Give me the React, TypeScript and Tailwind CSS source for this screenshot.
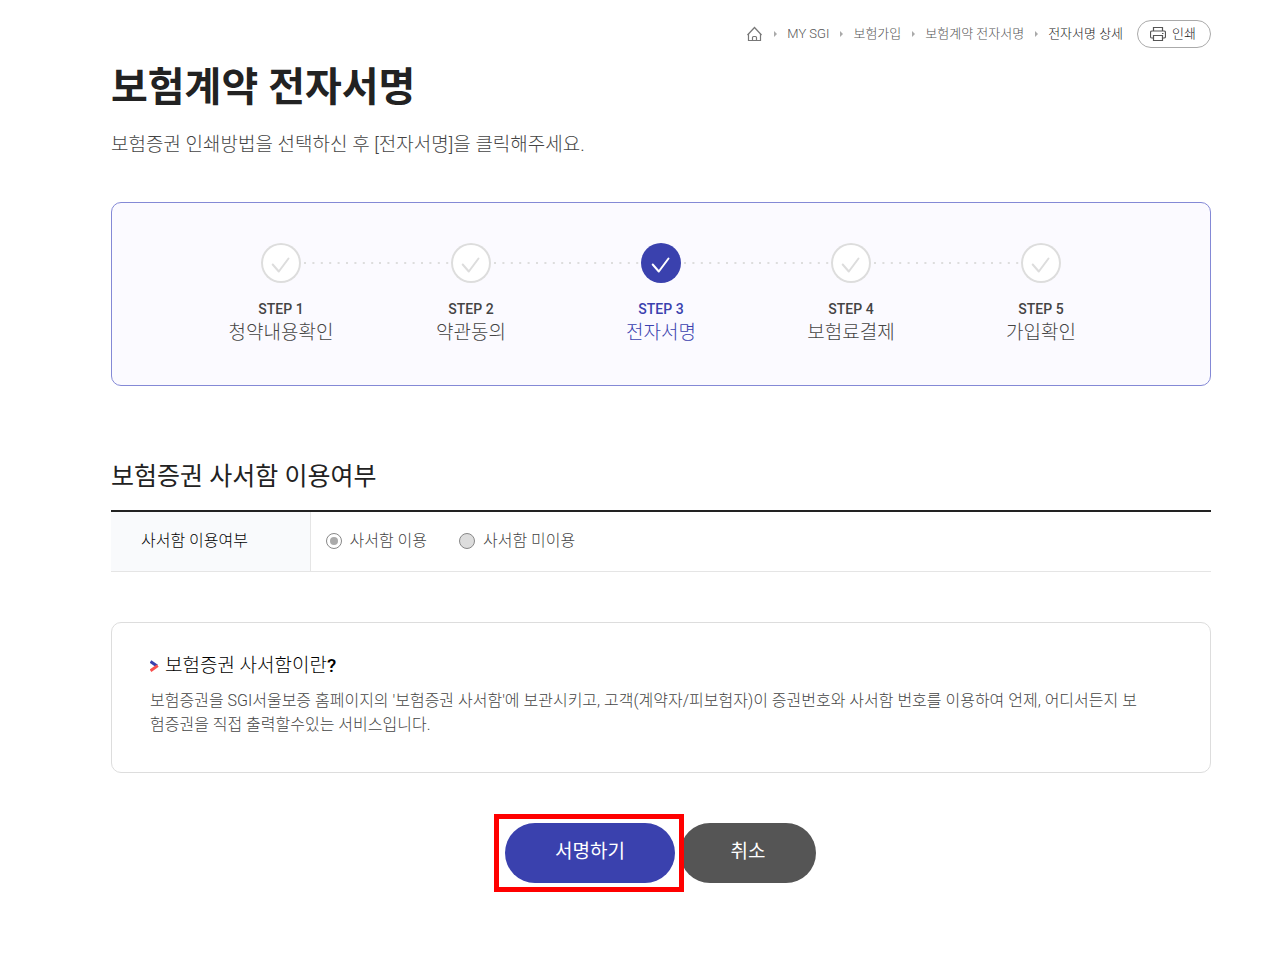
import { Fragment } from "react";
import clsx from "clsx";

const CRUMBS = ["MY SGI", "보험가입", "보험계약 전자서명", "전자서명 상세"];

const STEPS = ["청약내용확인", "약관동의", "전자서명", "보험료결제", "가입확인"];

const CURRENT_STEP = 2;

function HomeIcon() {
  return (
    <svg width="16" height="16" viewBox="0 0 16 16" fill="none" stroke="#777" strokeWidth="1.2">
      <path d="M0.5 9 L7.5 1.5 L14.5 9" />
      <path d="M1.5 8 V14.5 H13.5 V8" />
      <path d="M5.5 14.5 V11.5 Q5.5 10.5 6.5 10.5 H8.5 Q9.5 10.5 9.5 11.5 V14.5" />
    </svg>
  );
}

function PrintIcon() {
  return (
    <svg width="16" height="16" viewBox="0 0 16 16" fill="none" stroke="#555" strokeWidth="1.2">
      <path d="M3.5 5 V1.5 H12.5 V5" />
      <path d="M3.5 12 H2 Q0.5 12 0.5 10.5 V6.5 Q0.5 5 2 5 H14 Q15.5 5 15.5 6.5 V10.5 Q15.5 12 14 12 H12.5" />
      <path d="M3.5 9.5 H12.5 V14.5 H3.5 Z" />
      <path d="M12 7.5 H13.5" />
    </svg>
  );
}

function CrumbArrow() {
  return (
    <svg width="3" height="6" viewBox="0 0 3 6" fill="#aaa">
      <path d="M0 0 L3 3 L0 6 Z" />
    </svg>
  );
}

function CheckMark() {
  return (
    <svg width="40" height="40" viewBox="0 0 40 40" fill="none" stroke="currentColor" strokeWidth="2" strokeLinecap="round" strokeLinejoin="round">
      <path d="M11.7 21.5 L17.8 28.5 L27.5 15.5" />
    </svg>
  );
}

function BulletArrow() {
  return (
    <svg width="9" height="12" viewBox="0 0 9 12" fill="none" strokeWidth="3">
      <path d="M0.5 1.5 L7 6" stroke="#3a41ae" />
      <path d="M0.5 10.8 L7.8 5.6" stroke="#f9504e" />
    </svg>
  );
}

function Breadcrumb() {
  return (
    <div className="flex items-center justify-end">
      <nav className="flex items-center text-[13px] leading-5 text-[#555]">
        <a href="#home" aria-label="홈">
          <HomeIcon />
        </a>
        {CRUMBS.map((crumb, i) => (
          <Fragment key={crumb}>
            <span className="mr-[10px] ml-[11px]">
              <CrumbArrow />
            </span>
            <a href="#crumb" className={clsx(i === CRUMBS.length - 1 && "text-[#222]")}>
              {crumb}
            </a>
          </Fragment>
        ))}
      </nav>
      <button
        type="button"
        className="ml-3.5 flex h-7 items-center gap-1.5 rounded-full border border-[#aaa] pr-3.5 pl-3 text-[13px] text-[#222]"
      >
        <PrintIcon />
        인쇄
      </button>
    </div>
  );
}

function Steps() {
  return (
    <ol className="mt-[43px] flex justify-center rounded-[10px] border border-[#8489d6] bg-[#fbfaff] pt-10 pb-[38px]">
      {STEPS.map((label, i) => {
        const current = i === CURRENT_STEP;
        return (
          <li
            key={label}
            className={clsx(
              "flex w-[190px] flex-col items-center",
              current ? "text-[#3a41ae]" : "text-[#444]",
            )}
          >
            <div className="flex w-full items-center">
              <Dots hidden={i === 0} />
              <span
                className={clsx(
                  "h-10 w-10 shrink-0 rounded-full",
                  current
                    ? "bg-[#3a41ae] text-white"
                    : "bg-white text-[#ddd] shadow-[inset_0_0_0_2px_#ddd]",
                )}
              >
                <CheckMark />
              </span>
              <Dots hidden={i === STEPS.length - 1} />
            </div>
            <span className="mt-4 text-sm leading-5 font-medium">STEP {i + 1}</span>
            <span className="text-[19px] leading-7">{label}</span>
          </li>
        );
      })}
    </ol>
  );
}

function Dots({ hidden }: { hidden: boolean }) {
  return (
    <svg className={clsx("h-0.5 min-w-0 flex-1", hidden && "invisible")}>
      <line x1="3" y1="1" x2="100%" y2="1" stroke="#ddd" strokeWidth="2" strokeDasharray="2 6.4" />
    </svg>
  );
}

export default function App() {
  return (
    <main className="bg-white pr-[77px] pb-19 pl-[111px] font-['Roboto','Noto_Sans_CJK_KR',sans-serif] font-light text-[#444]">
      <div className="pt-5">
        <Breadcrumb />
      </div>
      <h1 className="mt-[11px] text-[40px] leading-[58px] font-bold text-[#222]">
        보험계약 전자서명
      </h1>
      <p className="mt-3.5 text-[19px] leading-7">
        보험증권 인쇄방법을 선택하신 후 [전자서명]을 클릭해주세요.
      </p>

      <Steps />

      <h2 className="mt-[73px] text-[25px] leading-9 font-normal text-[#222]">
        보험증권 사서함 이용여부
      </h2>
      <table className="mt-[15px] w-full border-t-2 border-b border-t-[#222] border-b-[#e5e5e5]">
        <tbody>
          <tr>
            <th
              scope="row"
              className="h-[60px] w-[199px] border-r border-[#e5e5e5] bg-[#f9fafc] pl-[30px] text-left text-base font-light text-black"
            >
              사서함 이용여부
            </th>
            <td className="pl-[15px]">
              <div className="flex items-center gap-8 text-base">
                <label className="flex items-center gap-2">
                  <input
                    type="radio"
                    name="mailbox"
                    defaultChecked
                    className="h-4 w-4 appearance-none rounded-full border border-[#888] bg-white bg-clip-content p-[3px] checked:bg-[#aaa]"
                  />
                  사서함 이용
                </label>
                <label className="flex items-center gap-2">
                  <input
                    type="radio"
                    name="mailbox"
                    className="h-4 w-4 appearance-none rounded-full border border-[#888] bg-[#ddd]"
                  />
                  사서함 미이용
                </label>
              </div>
            </td>
          </tr>
        </tbody>
      </table>

      <section className="mt-[50px] rounded-[10px] border border-[#ddd] pt-7 pr-16 pb-[35px] pl-[38px]">
        <h3 className="flex items-center gap-1.5 text-[19px] leading-[30px] font-light text-black">
          <BulletArrow />
          <span>
            보험증권 사서함이란<span className="font-medium">?</span>
          </span>
        </h3>
        <p className="mt-2 text-base leading-6 break-all">
          보험증권을 SGI서울보증 홈페이지의 '보험증권 사서함'에 보관시키고, 고객(계약자/피보험자)이
          증권번호와 사서함 번호를 이용하여 언제, 어디서든지 보험증권을 직접 출력할수있는
          서비스입니다.
        </p>
      </section>

      <div className="mt-[41px] flex justify-center pr-3">
        <div className="relative z-10 border-5 border-[#f00] py-1 pr-1 pl-1.5">
          <button
            type="button"
            className="h-[60px] w-[170px] rounded-full bg-[#3a41ae] text-[19px] font-normal text-white"
          >
            서명하기
          </button>
        </div>
        <button
          type="button"
          className="-ml-1 h-[60px] w-[136px] self-center rounded-full bg-[#555] text-[19px] font-normal text-white"
        >
          취소
        </button>
      </div>
    </main>
  );
}
